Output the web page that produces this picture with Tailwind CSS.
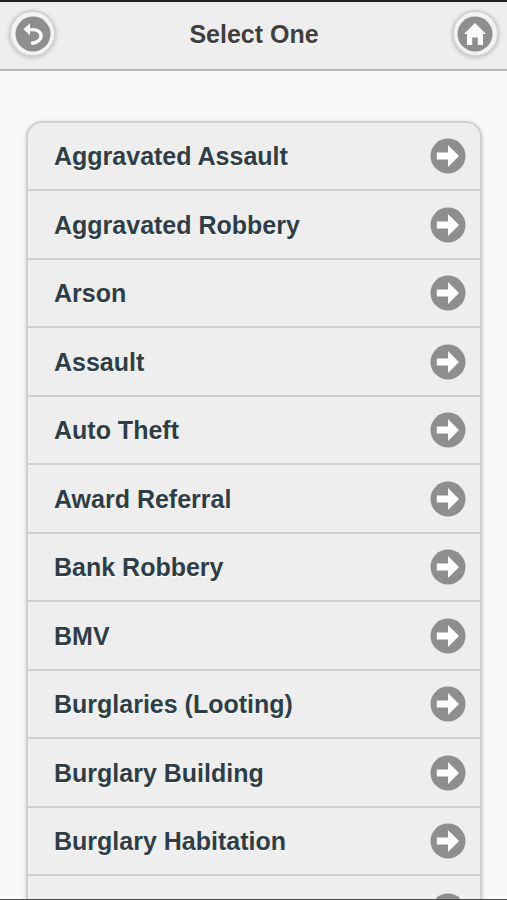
<!DOCTYPE html>
<html lang="en">
<head>
<meta charset="utf-8">
<meta name="viewport" content="width=device-width, initial-scale=1">
<title>Select One</title>
<script src="https://cdn.jsdelivr.net/npm/@tailwindcss/browser@4"></script>
</head>
<body class="flex h-screen flex-col overflow-hidden border-t-2 border-b border-t-[#231f20] border-b-[#4a4a4a] bg-[#f9f9f9] font-['Liberation_Sans',Arial,sans-serif] text-[25px] leading-8 font-bold">
<svg class="hidden" aria-hidden="true">
  <symbol id="arrow" viewBox="0 0 36 36">
    <circle cx="18" cy="18" r="17.5" fill="#8e8e8e"/>
    <path d="M6.800 14.600h11.200V7L29 18 18 29V21.400H6.800z" fill="#fff"/>
  </symbol>
</svg>
<header class="flex shrink-0 items-start justify-between border-b-2 border-[#b9b9b9] bg-[#eee] pt-2 pr-2 pb-3 pl-[9px]">
  <button type="button" aria-label="Back" class="flex size-[47px] items-center justify-center rounded-full border-2 border-[#d2d2d2] bg-[#f3f3f3] shadow-[0_1px_4px_rgba(0,0,0,0.2)]">
    <svg class="size-9 shrink-0" viewBox="0 0 36 36" aria-hidden="true">
      <circle cx="18" cy="18" r="17.500" fill="#8e8e8e"/>
      <path d="M14 13.600H18.500C28.800 14 28.800 25.500 17.500 27.300" fill="none" stroke="#fff" stroke-width="3.400" stroke-linecap="round"/>
      <path d="M8.500 13.300 15 7.300V19.300z" fill="#fff"/>
    </svg>
  </button>
  <h1 class="pt-2 text-[#3f3f3f] [text-shadow:0_1px_0_#fff]">Select One</h1>
  <a href="#home" aria-label="Home" class="flex size-[47px] items-center justify-center rounded-full border-2 border-[#d2d2d2] bg-[#f3f3f3] shadow-[0_1px_4px_rgba(0,0,0,0.2)]">
    <svg class="size-9 shrink-0" viewBox="0 0 36 36" aria-hidden="true">
      <circle cx="18" cy="18" r="17.500" fill="#8e8e8e"/>
      <path d="M18 7 29 18H26V29H20.800V21.500H15.200V29H10V18H7z" fill="#fff"/>
    </svg>
  </a>
</header>
<main class="min-h-0 flex-1 overflow-hidden pt-[50px] pr-[25px] pl-[26px]">
  <ul class="rounded-2xl border-2 border-[#cfcfcf] bg-[#eee] text-[#2f3e46] shadow-[0_1px_4px_rgba(0,0,0,0.2)] [text-shadow:0_1px_0_#fff] [&>li]:border-b-2 [&>li]:border-[#cfcfcf] [&>li:last-child]:border-b-0 [&>li:nth-child(odd)]:h-[68px] [&>li:nth-child(even)]:h-[69px]">
    <li><a href="#aggravated-assault" class="flex h-full items-center justify-between pr-[14px] pl-[26px]">Aggravated Assault<svg class="size-9" aria-hidden="true"><use href="#arrow"/></svg></a></li>
    <li><a href="#aggravated-robbery" class="flex h-full items-center justify-between pr-[14px] pl-[26px]">Aggravated Robbery<svg class="size-9" aria-hidden="true"><use href="#arrow"/></svg></a></li>
    <li><a href="#arson" class="flex h-full items-center justify-between pr-[14px] pl-[26px]">Arson<svg class="size-9" aria-hidden="true"><use href="#arrow"/></svg></a></li>
    <li><a href="#assault" class="flex h-full items-center justify-between pr-[14px] pl-[26px]">Assault<svg class="size-9" aria-hidden="true"><use href="#arrow"/></svg></a></li>
    <li><a href="#auto-theft" class="flex h-full items-center justify-between pr-[14px] pl-[26px]">Auto Theft<svg class="size-9" aria-hidden="true"><use href="#arrow"/></svg></a></li>
    <li><a href="#award-referral" class="flex h-full items-center justify-between pr-[14px] pl-[26px]">Award Referral<svg class="size-9" aria-hidden="true"><use href="#arrow"/></svg></a></li>
    <li><a href="#bank-robbery" class="flex h-full items-center justify-between pr-[14px] pl-[26px]">Bank Robbery<svg class="size-9" aria-hidden="true"><use href="#arrow"/></svg></a></li>
    <li><a href="#bmv" class="flex h-full items-center justify-between pr-[14px] pl-[26px]">BMV<svg class="size-9" aria-hidden="true"><use href="#arrow"/></svg></a></li>
    <li><a href="#burglaries-looting" class="flex h-full items-center justify-between pr-[14px] pl-[26px]">Burglaries (Looting)<svg class="size-9" aria-hidden="true"><use href="#arrow"/></svg></a></li>
    <li><a href="#burglary-building" class="flex h-full items-center justify-between pr-[14px] pl-[26px]">Burglary Building<svg class="size-9" aria-hidden="true"><use href="#arrow"/></svg></a></li>
    <li><a href="#burglary-habitation" class="flex h-full items-center justify-between pr-[14px] pl-[26px]">Burglary Habitation<svg class="size-9" aria-hidden="true"><use href="#arrow"/></svg></a></li>
    <li><a href="#more" aria-label="More" class="flex h-full items-center justify-end pr-[14px] pl-[26px]"><svg class="size-9" aria-hidden="true"><use href="#arrow"/></svg></a></li>
  </ul>
</main>
</body>
</html>
